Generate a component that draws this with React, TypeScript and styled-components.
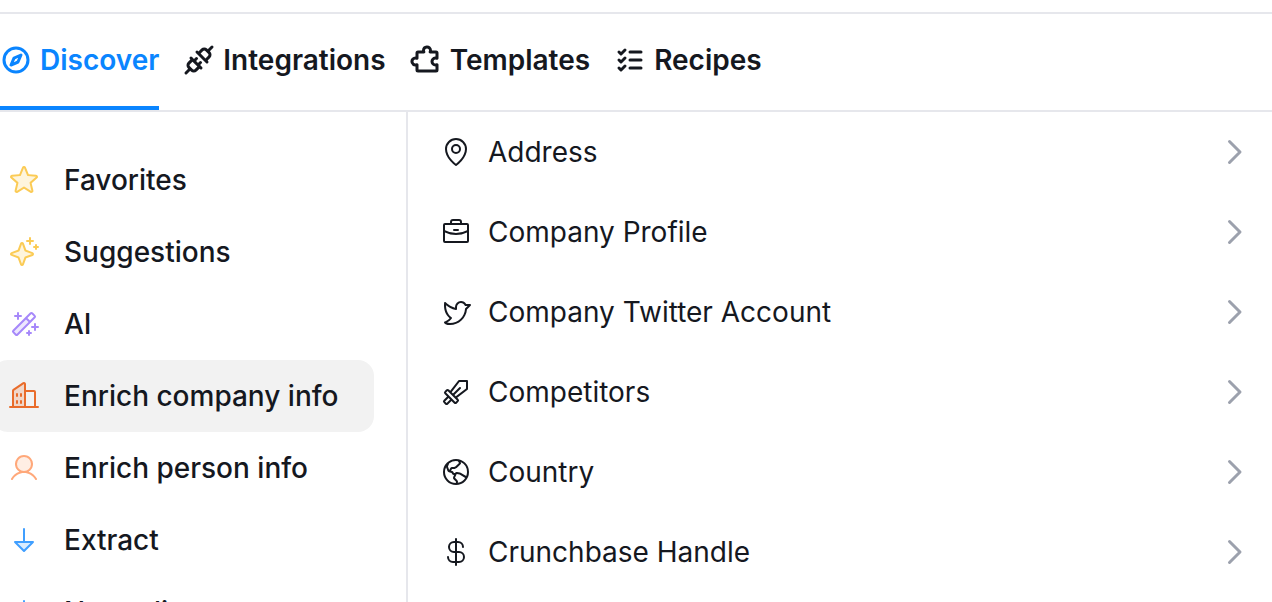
import { ReactNode, useState } from "react";
import { createGlobalStyle, styled } from "styled-components";
import {
  PiArrowDownDuotone,
  PiBriefcase,
  PiBuildingsDuotone,
  PiCompassBold,
  PiCurrencyDollar,
  PiGlobeHemisphereWest,
  PiListChecksBold,
  PiMagicWandDuotone,
  PiMapPin,
  PiPlugsBold,
  PiPuzzlePieceBold,
  PiSparkleDuotone,
  PiStarDuotone,
  PiSword,
  PiTwitterLogo,
  PiUserDuotone,
} from "react-icons/pi";

interface IEntry {
  label: string;
  icon: ReactNode;
  color?: string;
}

const GlobalStyle = createGlobalStyle`
  * {
    box-sizing: border-box;
  }
  body {
    margin: 0;
    background-color: white;
    color: #15181f;
    font-family: Inter, "Liberation Sans", sans-serif;
    font-size: 28px;
    -webkit-font-smoothing: antialiased;
  }
  svg {
    display: block;
  }
`;

const Wrapper = styled.div`
  display: flex;
  flex-direction: column;
  height: 602px;
  padding-top: 12px;
  overflow: hidden;
`;

const Tabs = styled.nav`
  display: flex;
  flex-shrink: 0;
  gap: 24px;
  height: 100px;
  border-top: 2px solid #e6e7ec;
  border-bottom: 2px solid #e6e7ec;
`;

const Tab = styled.button<{ $active: boolean }>`
  display: flex;
  align-items: center;
  gap: 8px;
  padding: 0;
  border: 0;
  border-bottom: 4px solid ${(props) => (props.$active ? "#0a85ff" : "transparent")};
  background: none;
  color: ${(props) => (props.$active ? "#0a85ff" : "#15181f")};
  font-family: inherit;
  font-size: 28px;
  font-weight: 600;
  white-space: nowrap;
  cursor: pointer;
`;

const Content = styled.div`
  display: flex;
  flex: 1;
  min-height: 0;
`;

const Sidebar = styled.aside`
  flex-shrink: 0;
  width: 408px;
  padding-top: 32px;
  padding-right: 32px;
  border-right: 2px solid #e6e7ec;
  overflow: hidden;
`;

const Category = styled.div<{ $active: boolean }>`
  display: flex;
  align-items: center;
  gap: 24px;
  height: 72px;
  margin-left: -8px;
  padding-left: 16px;
  border-radius: 16px;
  background-color: ${(props) => (props.$active ? "#f2f2f2" : "transparent")};
  font-weight: 500;
  cursor: pointer;
`;

const CategoryIcon = styled.span<{ $color?: string }>`
  color: ${(props) => props.$color};
`;

const List = styled.main`
  flex: 1;
  padding: 0 20px 0 32px;
  overflow: hidden;
`;

const Row = styled.div`
  display: flex;
  align-items: center;
  gap: 16px;
  height: 80px;
  cursor: pointer;
`;

const RowLabel = styled.span`
  flex: 1;
`;

const Chevron = styled.svg`
  width: 32px;
  height: 32px;
  fill: none;
  stroke: #9ca1ad;
  stroke-width: 3;
  stroke-linecap: round;
  stroke-linejoin: round;
`;

const tabs: IEntry[] = [
  { label: "Discover", icon: <PiCompassBold size={32} /> },
  { label: "Integrations", icon: <PiPlugsBold size={32} /> },
  { label: "Templates", icon: <PiPuzzlePieceBold size={32} /> },
  { label: "Recipes", icon: <PiListChecksBold size={32} /> },
];

const categories: IEntry[] = [
  { label: "Favorites", icon: <PiStarDuotone size={32} />, color: "#fbcb55" },
  { label: "Suggestions", icon: <PiSparkleDuotone size={32} />, color: "#fbcb55" },
  { label: "AI", icon: <PiMagicWandDuotone size={32} />, color: "#a688fa" },
  { label: "Enrich company info", icon: <PiBuildingsDuotone size={32} />, color: "#e96c2b" },
  { label: "Enrich person info", icon: <PiUserDuotone size={32} />, color: "#ffa87a" },
  { label: "Extract", icon: <PiArrowDownDuotone size={32} />, color: "#409fff" },
  { label: "Normalize", icon: <PiArrowDownDuotone size={32} />, color: "#409fff" },
];

const enrichments: IEntry[] = [
  { label: "Address", icon: <PiMapPin size={32} /> },
  { label: "Company Profile", icon: <PiBriefcase size={32} /> },
  { label: "Company Twitter Account", icon: <PiTwitterLogo size={32} /> },
  { label: "Competitors", icon: <PiSword size={32} /> },
  { label: "Country", icon: <PiGlobeHemisphereWest size={32} /> },
  { label: "Crunchbase Handle", icon: <PiCurrencyDollar size={32} /> },
];

export default function App() {
  const [tab, setTab] = useState("Discover");
  const [category, setCategory] = useState("Enrich company info");

  return (
    <Wrapper>
      <GlobalStyle />
      <Tabs>
        {tabs.map(({ label, icon }) => (
          <Tab key={label} $active={label === tab} onClick={() => setTab(label)}>
            {icon}
            {label}
          </Tab>
        ))}
      </Tabs>
      <Content>
        <Sidebar>
          {categories.map(({ label, icon, color }) => (
            <Category
              key={label}
              $active={label === category}
              onClick={() => setCategory(label)}
            >
              <CategoryIcon $color={color}>{icon}</CategoryIcon>
              {label}
            </Category>
          ))}
        </Sidebar>
        <List>
          {enrichments.map(({ label, icon }) => (
            <Row key={label}>
              {icon}
              <RowLabel>{label}</RowLabel>
              <Chevron viewBox="0 0 32 32">
                <path d="M9.5 5.5l10.5 10.5-10.5 10.5" />
              </Chevron>
            </Row>
          ))}
        </List>
      </Content>
    </Wrapper>
  );
}
